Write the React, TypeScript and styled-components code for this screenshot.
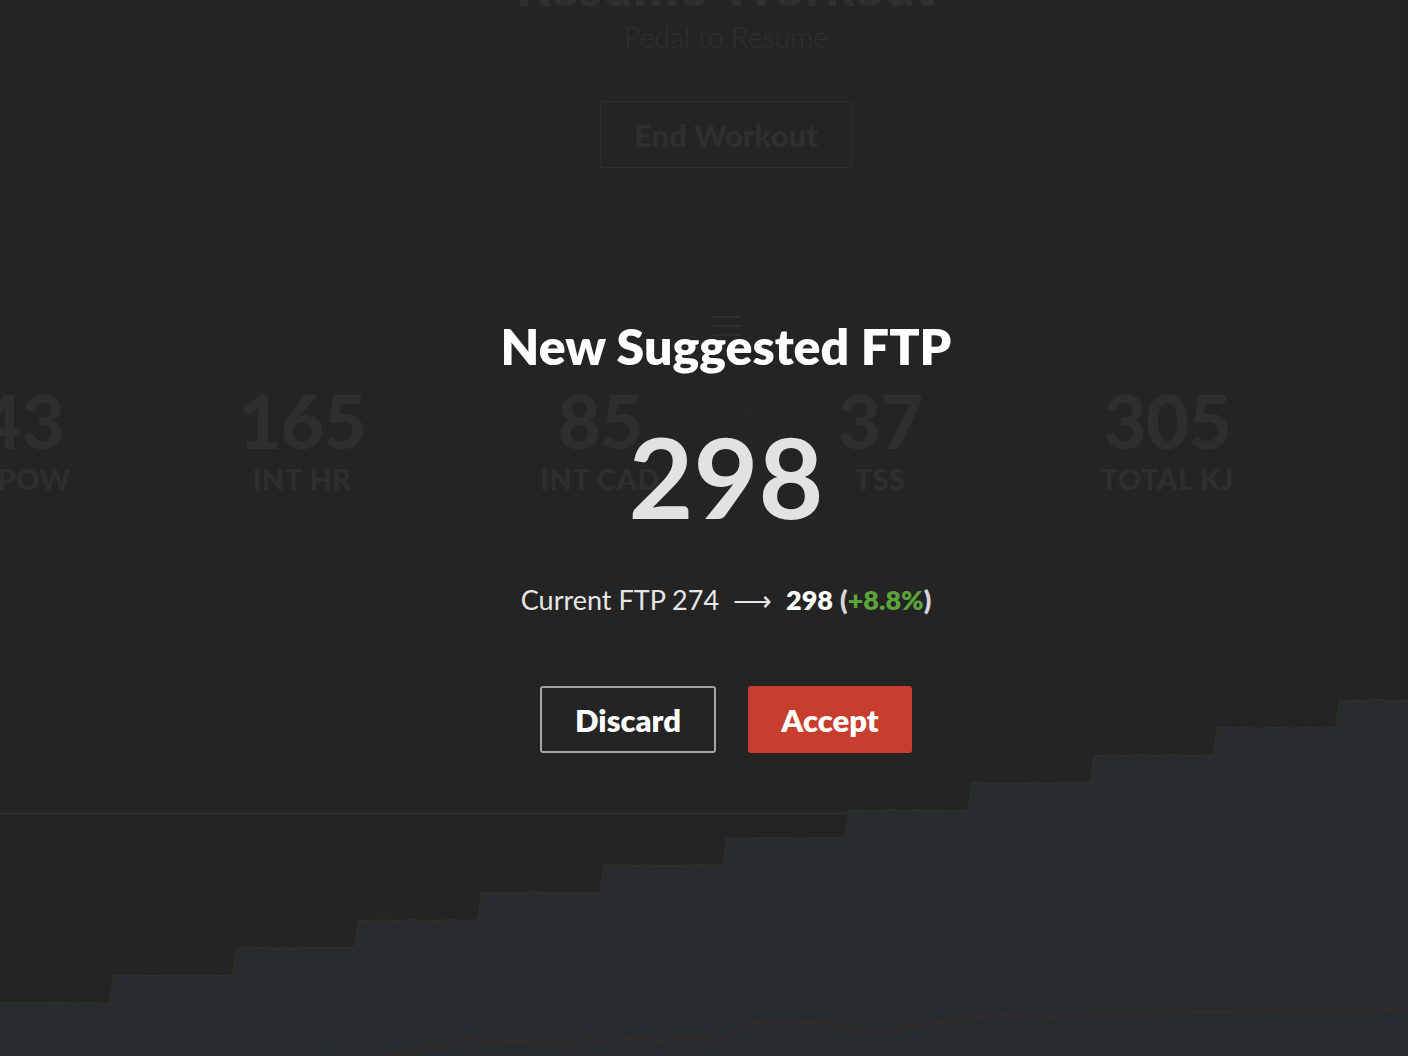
import React from "react";
import styled, { createGlobalStyle } from "styled-components";

const FONT = `"Lato", "Noto Sans", sans-serif`;

const Global = createGlobalStyle`
  html, body { margin: 0; padding: 0; background: #242424; }
  body { font-family: ${FONT}; overflow: hidden; }
  * { box-sizing: border-box; }
`;

const Page = styled.div`
  position: relative;
  width: 1408px;
  height: 1056px;
  overflow: hidden;
  background: #242424;
`;

/* ---------- faded workout screen behind the overlay ---------- */
const Backdrop = styled.div`
  display: flex;
  flex-direction: column;
  align-items: center;
  height: 100%;
  padding-left: 44px;
`;

const ResumeTitle = styled.h1`
  margin: -44px 0 0;
  font-size: 54px;
  line-height: 60px;
  font-weight: 900;
  color: #2f2f2f;
`;

const ResumeSub = styled.div`
  margin-top: 5px;
  font-size: 28.5px;
  font-weight: 300;
  color: #2f2f2f;
  line-height: 32px;
`;

const EndButton = styled.div`
  margin-top: 48px;
  width: 252px;
  height: 67px;
  border: 1px solid #2e2e2e;
  border-radius: 2px;
  display: flex;
  align-items: center;
  justify-content: center;
  font-size: 31px;
  font-weight: 900;
  color: #2f2f2f;
`;

const MenuIcon = styled.div`
  margin-top: 148px;
  width: 26px;
  display: flex;
  flex-direction: column;
  gap: 7px;
  span {
    display: block;
    height: 2px;
    background: #303030;
  }
`;

const StatsRow = styled.div`
  align-self: flex-start;
  margin-top: 46px;
  margin-left: -194px;
  display: flex;
`;

const Stat = styled.div<{ $w: number; $divider?: boolean }>`
  position: relative;
  width: ${(p) => p.$w}px;
  display: flex;
  flex-direction: column;
  align-items: center;
  ${(p) =>
    p.$divider &&
    `&::before {
      content: "";
      position: absolute;
      left: 0;
      top: 31px;
      height: 44px;
      width: 1px;
      background: #282828;
    }`}
`;

const StatValue = styled.div`
  font-size: 75px;
  line-height: 76px;
  font-weight: 900;
  color: #2e2e2e;
  letter-spacing: -1px;
`;

const StatLabel = styled.div`
  margin-top: 6px;
  font-size: 29px;
  line-height: 30px;
  font-weight: 900;
  color: #2e2e2e;
  letter-spacing: 0.5px;
`;

const Chart = styled.svg`
  margin-top: auto;
  margin-left: -44px;
  display: block;
  flex-shrink: 0;
`;

/* ---------- foreground overlay ---------- */
const Overlay = styled.div`
  position: absolute;
  inset: 0;
  padding-left: 44px;
  display: flex;
  flex-direction: column;
  align-items: center;
`;

const Title = styled.h2`
  margin: 318px 0 0;
  font-size: 50px;
  line-height: 56px;
  font-weight: 800;
  color: #ffffff;
`;

const BigNumber = styled.div`
  margin-top: 50px;
  font-size: 112px;
  line-height: 104px;
  font-weight: 700;
  color: #e2e2e2;
`;

const Compare = styled.div`
  margin-top: 56px;
  display: flex;
  align-items: baseline;
  font-size: 27px;
  line-height: 32px;
  color: #e6e6e6;
  font-weight: 400;
`;

const Arrow = styled.span`
  margin: 0 14px;
  font-size: 27px;
`;

const Strong = styled.span`
  font-weight: 800;
  color: #ffffff;
`;

const Paren = styled.span<{ $left?: boolean }>`
  font-weight: 800;
  color: #d6d6d6;
  margin-left: ${(p) => (p.$left ? 7 : 0)}px;
`;

const Green = styled.span`
  font-weight: 800;
  color: #5ba33b;
`;

const Buttons = styled.div`
  margin-top: 70px;
  display: flex;
  gap: 32px;
`;

const Button = styled.button<{ $primary?: boolean }>`
  height: 67px;
  width: ${(p) => (p.$primary ? 164 : 176)}px;
  border-radius: 3px;
  border: ${(p) => (p.$primary ? "none" : "2px solid #a3a3a3")};
  background: ${(p) => (p.$primary ? "#c93d2e" : "transparent")};
  color: #ffffff;
  font-family: ${FONT};
  font-size: 31px;
  font-weight: 800;
  cursor: pointer;
`;

/* ---------- chart data ---------- */
function rand(seed: number) {
  const x = Math.sin(seed * 12.9898) * 43758.5453;
  return x - Math.floor(x);
}

function stepPath(): string {
  const pts: string[] = [];
  const base = 323;
  const h = 27.5;
  const firstX = 112;
  const dx = 122.6;
  let x = 0;
  pts.push(`M0,${base}`);
  for (let k = 0; k <= 11; k++) {
    const y = base - h * k;
    const endX = k < 11 ? firstX + dx * k - 2 : 1408;
    for (let xx = x + 6; xx < endX; xx += 9) {
      const j = (rand(k * 100 + xx) - 0.5) * 1.4;
      pts.push(`L${xx.toFixed(1)},${(y + j).toFixed(1)}`);
    }
    pts.push(`L${endX.toFixed(1)},${y}`);
    if (k < 11) {
      pts.push(`L${(endX + 4).toFixed(1)},${y - h}`);
      x = endX + 4;
    }
  }
  return pts.join(" ");
}

const redPts: [number, number][] = [
  [300, 1058], [330, 1056], [360, 1057], [402, 1055], [428, 1047], [451, 1046],
  [464, 1038], [475, 1039], [487, 1043], [509, 1041], [530, 1041], [545, 1045],
  [556, 1044], [565, 1048], [585, 1039], [610, 1041], [625, 1039], [647, 1038],
  [660, 1042], [672, 1038], [696, 1038], [708, 1039], [720, 1041], [735, 1031],
  [750, 1023], [790, 1024], [826, 1022], [850, 1029], [880, 1032], [890, 1033],
  [910, 1026], [940, 1023], [966, 1018], [990, 1016], [1007, 1015], [1025, 1016],
  [1043, 1019], [1060, 1016], [1075, 1019], [1097, 1013], [1140, 1014], [1188, 1012],
  [1230, 1012], [1273, 1010], [1287, 1013], [1320, 1013], [1359, 1013], [1377, 1008],
  [1395, 1010], [1408, 1008],
];

function redPath(): string {
  return redPts
    .map(([x, y], i) => `${i === 0 ? "M" : "L"}${x},${y - 680}`)
    .join(" ");
}

const stats = [
  { v: "243", l: "AVG POW", w: 300, d: false },
  { v: "165", l: "INT HR", w: 304, d: true },
  { v: "85", l: "INT CAD", w: 292, d: true },
  { v: "37", l: "TSS", w: 268, d: true },
  { v: "305", l: "TOTAL KJ", w: 306, d: true },
];

export default function App() {
  const steps = stepPath();
  return (
    <>
      <Global />
      <Page>
        <Backdrop>
          <ResumeTitle>Resume Workout</ResumeTitle>
          <ResumeSub>Pedal to Resume</ResumeSub>
          <EndButton>End Workout</EndButton>
          <MenuIcon>
            <span />
            <span />
            <span />
          </MenuIcon>
          <StatsRow>
            {stats.map((s) => (
              <Stat key={s.l} $w={s.w} $divider={s.d}>
                <StatValue>{s.v}</StatValue>
                <StatLabel>{s.l}</StatLabel>
              </Stat>
            ))}
          </StatsRow>
          <Chart width={1408} height={376} viewBox="0 0 1408 376">
            <line x1={0} y1={133.5} x2={1408} y2={133.5} stroke="#2d2d2d" strokeWidth={2} />
            <path d={`${steps} L1408,376 L0,376 Z`} fill="#272b2e" />
            <path d={steps} fill="none" stroke="#2c2f27" strokeWidth={2} />
            <path d={redPath()} fill="none" stroke="#352a29" strokeWidth={2} />
          </Chart>
        </Backdrop>
        <Overlay>
          <Title>New Suggested FTP</Title>
          <BigNumber>298</BigNumber>
          <Compare>
            <span>Current FTP 274</span>
            <Arrow>⟶</Arrow>
            <Strong>298</Strong>
            <Paren $left>(</Paren>
            <Green>+8.8%</Green>
            <Paren>)</Paren>
          </Compare>
          <Buttons>
            <Button>Discard</Button>
            <Button $primary>Accept</Button>
          </Buttons>
        </Overlay>
      </Page>
    </>
  );
}
